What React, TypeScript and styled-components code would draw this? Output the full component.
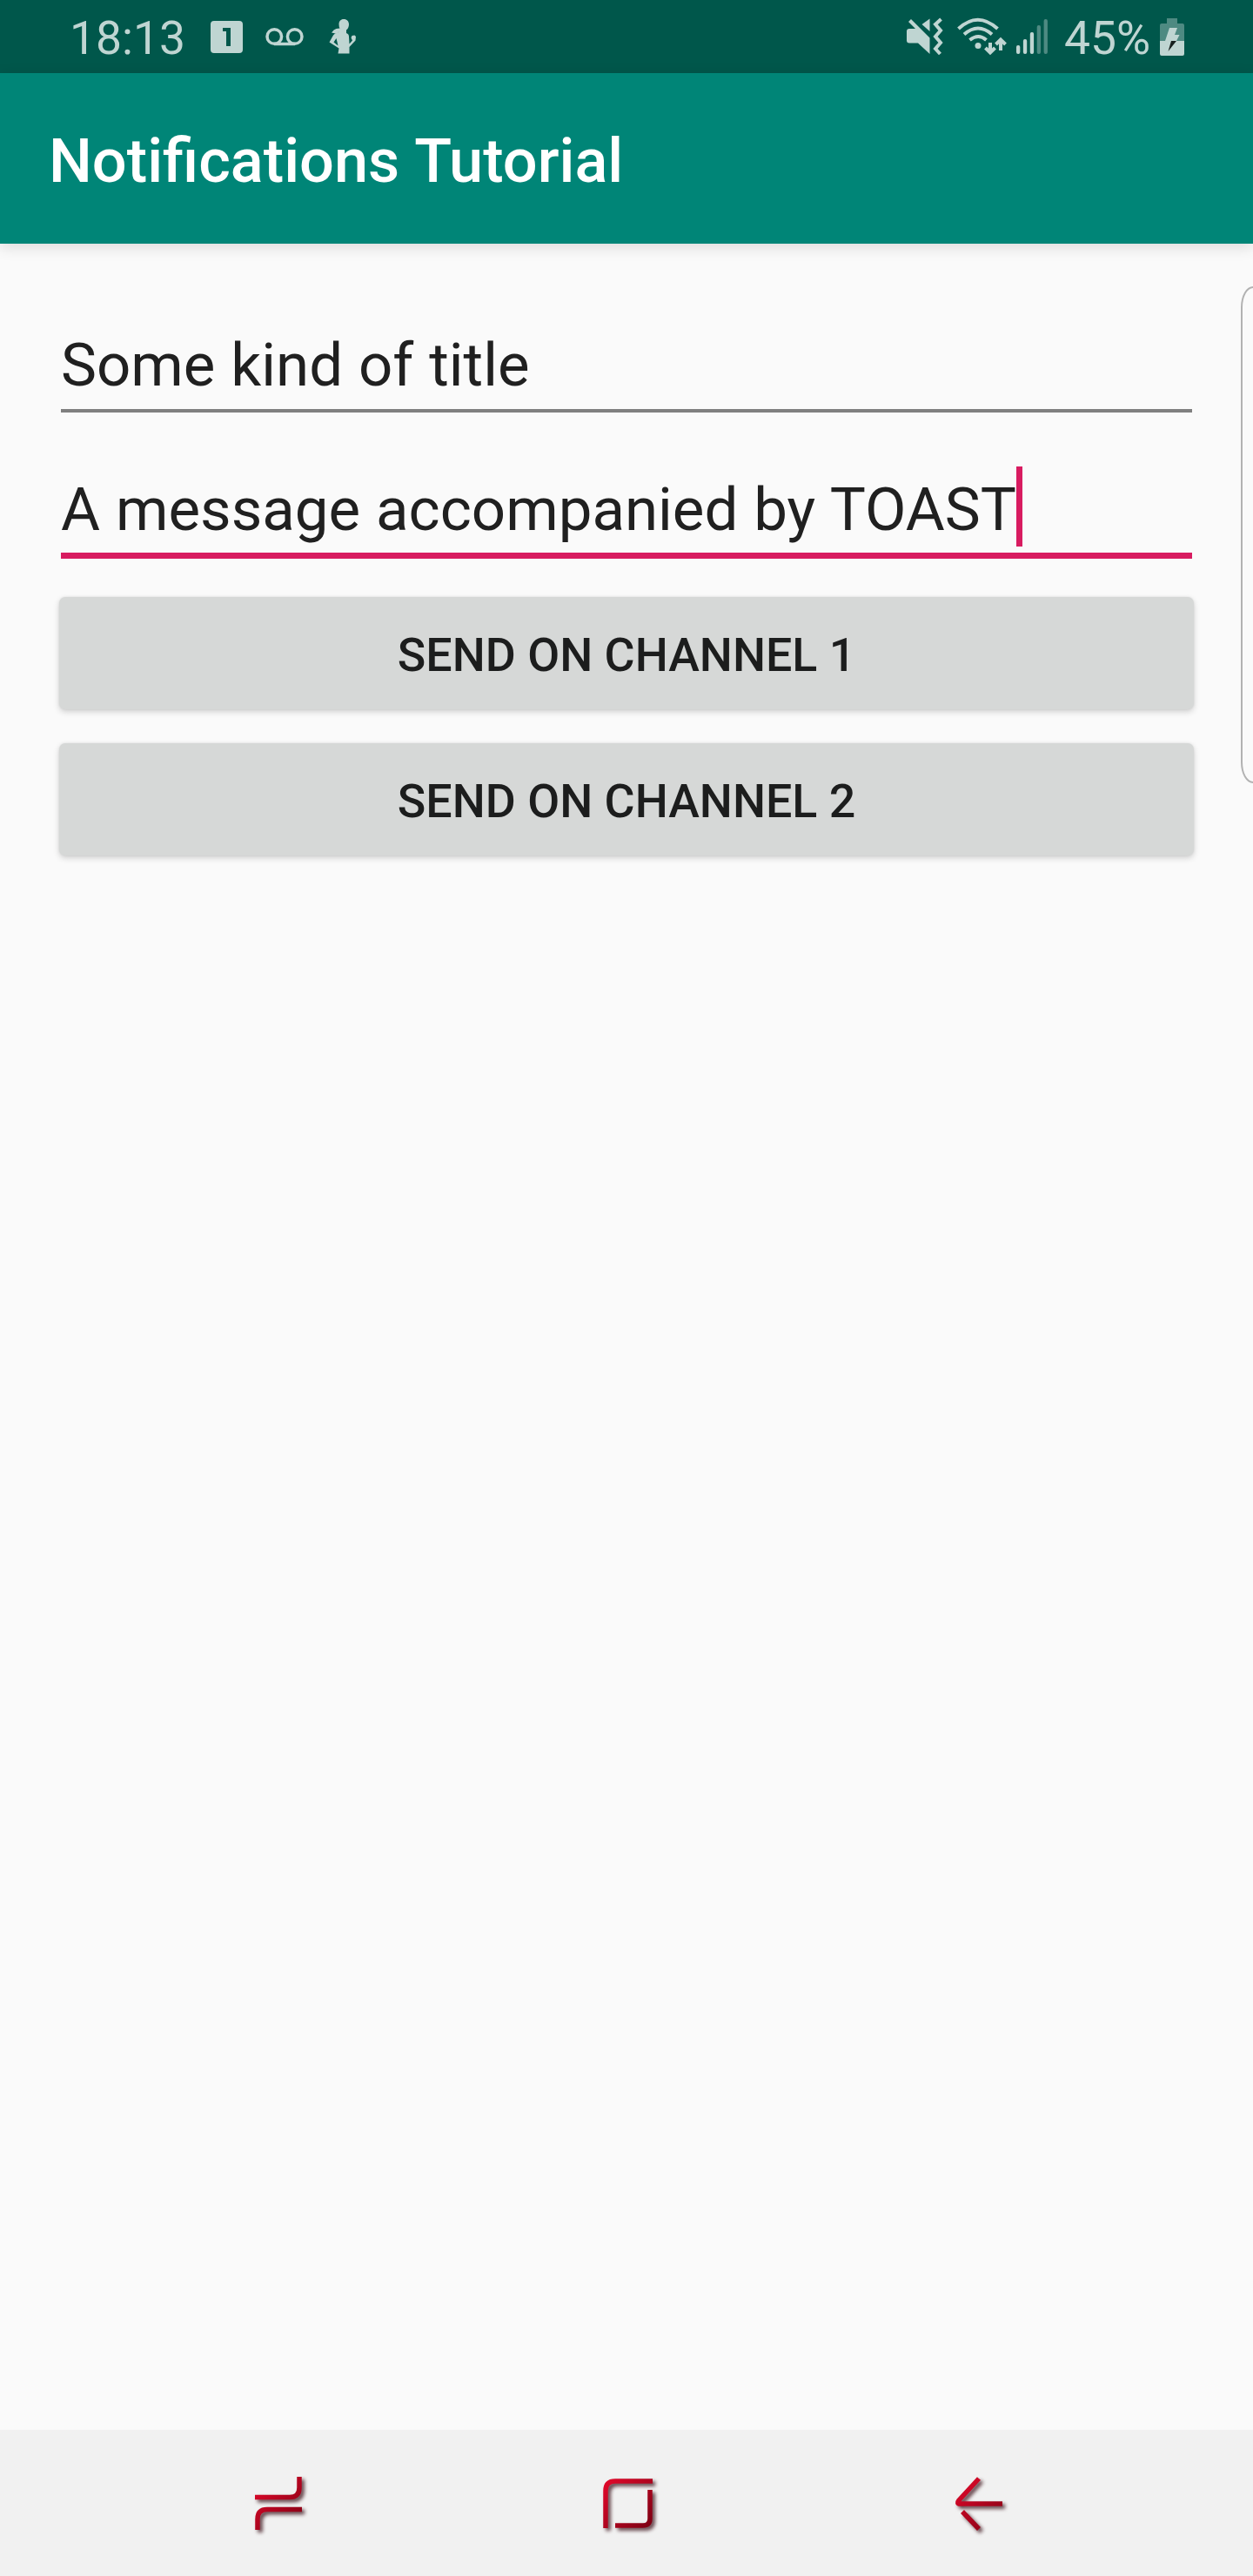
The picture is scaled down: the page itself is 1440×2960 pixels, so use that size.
import React from "react";
import styled, { createGlobalStyle } from "styled-components";

const Global = createGlobalStyle`
  body { margin: 0; background: #fafafa; }
  * { box-sizing: border-box; }
`;

const Screen = styled.div`
  position: relative;
  display: flex;
  flex-direction: column;
  width: 1440px;
  height: 2960px;
  overflow: hidden;
  background: #fafafa;
  color: #202020;
  font-family: Roboto, "Noto Sans", sans-serif;
`;

const StatusBar = styled.header`
  display: flex;
  flex: none;
  align-items: center;
  justify-content: space-between;
  height: 84px;
  padding: 0 79px 0 80px;
  background: #00574b;
  color: #bfd5d2;
`;

const StatusGroup = styled.div`
  display: flex;
  align-items: center;
  height: 84px;
`;

const StatusText = styled.span<{ $width: number; $gap?: number }>`
  width: ${(p) => p.$width}px;
  margin-left: ${(p) => p.$gap ?? 0}px;
  padding-top: 4px;
  font-size: 53.4px;
  line-height: 84px;
  white-space: nowrap;
`;

const Glyph = styled.svg<{ $gap?: number }>`
  display: block;
  flex: none;
  margin-left: ${(p) => p.$gap ?? 0}px;
  overflow: visible;
`;

const AppBar = styled.div`
  position: relative;
  display: flex;
  flex: none;
  align-items: center;
  height: 196px;
  padding: 6px 56px 0;
  background: #008577;
  box-shadow: 0 4px 16px rgba(0, 0, 0, 0.13);
`;

const Title = styled.h1`
  margin: 0;
  color: #fff;
  font-size: 70.3px;
  font-weight: 500;
  line-height: 82px;
  word-spacing: 1px;
  white-space: nowrap;
`;

const Form = styled.main`
  display: flex;
  flex: 1;
  flex-direction: column;
  padding: 56px 68px 0;
`;

const Field = styled.label<{ $focused?: boolean }>`
  display: flex;
  align-items: flex-end;
  height: ${(p) => (p.$focused ? 168 : 138)}px;
  margin: 0 2px;
  padding-bottom: ${(p) => (p.$focused ? 7 : 4)}px;
  border-bottom: ${(p) => (p.$focused ? "7px solid #d81b60" : "4px solid #7f7f7f")};
`;

const FieldText = styled.span<{ $drop?: number }>`
  margin-bottom: ${(p) => -(p.$drop ?? 0)}px;
  font-size: 69px;
  line-height: 92px;
  word-spacing: 0.8px;
  white-space: nowrap;
`;

const Caret = styled.i`
  width: 7px;
  height: 92px;
  background: #d81b60;
`;

const Actions = styled.div`
  display: flex;
  flex-direction: column;
  gap: 39px;
  margin-top: 44px;
`;

const SendButton = styled.button`
  height: 129px;
  padding: 4px 0 0;
  border: 0;
  border-radius: 7px;
  background: #d6d8d7;
  box-shadow: 0 3px 7px rgba(0, 0, 0, 0.17), 0 0 3px rgba(0, 0, 0, 0.08);
  color: #1c1d1d;
  font: 500 53.7px/62px Roboto, "Noto Sans", sans-serif;
`;

const EdgeHandle = styled.div`
  position: absolute;
  top: 329px;
  right: -14px;
  width: 28px;
  height: 571px;
  border: 2px solid #b2b2b2;
  border-radius: 14px / 24px;
`;

const NavBar = styled.nav`
  display: flex;
  flex: none;
  align-items: center;
  height: 168px;
  padding: 0 270px;
  justify-content: space-between;
  background: #f1f1f1;
`;

const NavIcon = styled.svg`
  display: block;
  overflow: visible;
  filter: drop-shadow(3px 3px 2px rgba(45, 0, 8, 0.75));
`;

const One = () => (
  <Glyph width="37" height="37" viewBox="0 0 37 37" $gap={27}>
    <path fill="currentColor" fillRule="evenodd" d="M4 0h29q4 0 4 4v29q0 4-4 4H4q-4 0-4-4V4q0-4 4-4ZM14 8v4h4v17h5V8Z" />
  </Glyph>
);

const Voicemail = () => (
  <Glyph width="44" height="21" viewBox="0 0 44 21" $gap={26}>
    <g fill="none" stroke="currentColor" strokeWidth="3.5">
      <circle cx="10.3" cy="10" r="8.3" />
      <circle cx="33.7" cy="10" r="8.3" />
      <path d="M10 18.5h24" />
    </g>
  </Glyph>
);

const Runner = () => (
  <Glyph width="32" height="40" viewBox="0 0 32 40" $gap={29}>
    <path
      fill="currentColor"
      d="M17 0c3.800 0 6 2.600 6 6 0 3-1.300 5.300-3 6.500v3.500c2 .8 3 2 3 4l.5 8.500 3.500-4-1.500-3 1-2.500 3-.5 1.500 1.500-.5 4.500-7 7.500V39.500h-13l1-6L.5 26.500 5 18.500q1.500-2.500 5-3l2-1.500q-3 2.500-5.500 2.200L3 15.500q2.500-3.800 5.500-4.500l4-.5Q11.500 9 11.500 6C11.500 2.500 13.500 0 17 0ZM8.500 22 5.500 26.500l5 4Z"
    />
  </Glyph>
);

const Muted = () => (
  <Glyph width="42" height="43" viewBox="0 0 42 43">
    <g fill="currentColor">
      <path d="M5 1 26.5 22.5V41L13 28.500H3q-3 0-3-3V15q0-3 3-3h7L2 4Z" />
      <path d="m17.500 7 9-6.500V15Z" />
    </g>
    <path d="m39.500 1-6.500 6 6 7-6 7 6 7-6 7 5.500 6" fill="none" stroke="currentColor" strokeWidth="4" />
  </Glyph>
);

const Wifi = () => (
  <Glyph width="56" height="42" viewBox="0 0 56 42" $gap={16}>
    <g fill="none" stroke="currentColor" strokeWidth="4">
      <path d="M1.500 12q22-20.500 45 0M8 18.500q16-14 32 0M14.500 25q10-8 19 0" />
      <path d="M38 28v11m-5.500-5 5.500 5.500 5.500-5.500M50 37V26m-5.500 4 5.500-5.500 5.500 5.500" />
    </g>
    <circle cx="24" cy="31.500" r="3.500" fill="currentColor" />
  </Glyph>
);

const bars = [
  { height: 10, active: true },
  { height: 17, active: true },
  { height: 25, active: true },
  { height: 33, active: false },
  { height: 40, active: false },
];

const Signal = () => (
  <Glyph width="36" height="40" viewBox="0 0 36 40" $gap={12}>
    {bars.map((bar, i) => (
      <rect key={i} x={i * 7.9} y={40 - bar.height} width="4.300" height={bar.height} rx="2" fill={bar.active ? "#bfd5d2" : "#4e8a82"} />
    ))}
  </Glyph>
);

const Battery = () => (
  <Glyph width="28" height="43" viewBox="0 0 28 43">
    <path fill="#4e8a82" d="M8 0h12v6h6q2 0 2 2v18H0V8q0-2 2-2h6Z" />
    <path fill="currentColor" d="M0 26h28v15q0 2-2 2H2q-2 0-2-2ZM11 11h9l-3 8h5.500L19 26H6Z" />
    <path fill="#17211f" d="M13 26h6L9.500 38Z" />
  </Glyph>
);

const RedFill = ({ id, size }: { id: string; size: number }) => (
  <linearGradient id={id} gradientUnits="userSpaceOnUse" x1="0" y1="0" x2={size} y2={size}>
    <stop offset="0.35" stopColor="#dc0829" />
    <stop offset="1" stopColor="#780012" />
  </linearGradient>
);

export default function App() {
  return (
    <>
      <Global />
      <Screen>
        <StatusBar>
          <StatusGroup>
            <StatusText $width={135}>18:13</StatusText>
            <One />
            <Voicemail />
            <Runner />
          </StatusGroup>
          <StatusGroup>
            <Muted />
            <Wifi />
            <Signal />
            <StatusText $width={110} $gap={19}>45%</StatusText>
            <Battery />
          </StatusGroup>
        </StatusBar>
        <AppBar>
          <Title>Notifications Tutorial</Title>
        </AppBar>
        <Form>
          <Field>
            <FieldText>Some kind of title</FieldText>
          </Field>
          <Field $focused>
            <FieldText $drop={4}>A message accompanied by TOAST</FieldText>
            <Caret />
          </Field>
          <Actions>
            <SendButton>SEND ON CHANNEL 1</SendButton>
            <SendButton>SEND ON CHANNEL 2</SendButton>
          </Actions>
        </Form>
        <EdgeHandle />
        <NavBar aria-label="System navigation">
          <NavIcon width="100" height="100" viewBox="0 0 100 100">
            <defs><RedFill id="recent" size={80} /></defs>
            <path d="M23 43.500h40q11 0 11-11V20M77 57.500H37q-11 0-11 11V81" fill="none" stroke="url(#recent)" strokeWidth="5.500" />
          </NavIcon>
          <NavIcon width="100" height="100" viewBox="0 0 100 100">
            <defs><RedFill id="home" size={80} /></defs>
            <path d="M26 79V36q0-11 11-11H80M77 35V68q0 8-8 8H37" fill="none" stroke="url(#home)" strokeWidth="5.500" />
          </NavIcon>
          <NavIcon width="100" height="100" viewBox="0 0 100 100">
            <defs><RedFill id="back" size={85} /></defs>
            <path d="M55 22 32 47q-3 4 1 4H82M36 60l19 20" fill="none" stroke="url(#back)" strokeWidth="5.500" />
          </NavIcon>
        </NavBar>
      </Screen>
    </>
  );
}
